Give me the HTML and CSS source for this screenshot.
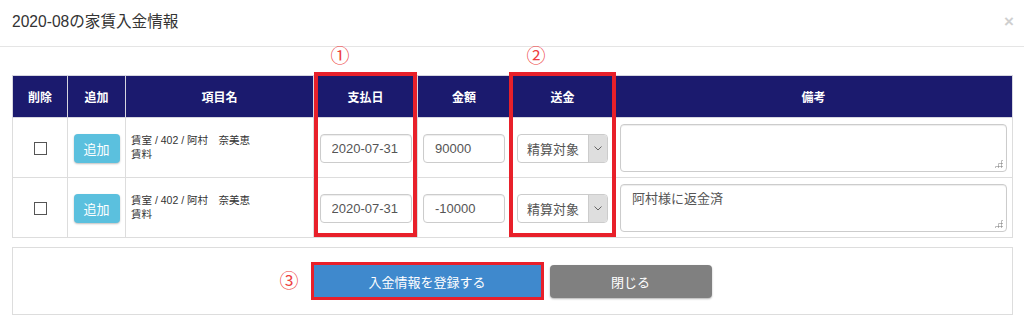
FILE: index.html
```html
<!DOCTYPE html>
<html lang="ja">
  <head>
    <meta charset="UTF-8" />
    <meta name="viewport" content="width=device-width, initial-scale=1.0" />
    <title>家賃入金情報</title>
    <link rel="stylesheet" href="styles.css">
  </head>
  <body>
    <div class="modal">
      <div class="modal-header">
        <h4 class="modal-title">2020-08の家賃入金情報</h4>
        <span class="close">&times;</span>
      </div>
      <div class="modal-body">
        <div class="table-wrap">
          <table class="payments">
            <colgroup>
              <col style="width: 55px" />
              <col style="width: 58px" />
              <col style="width: 188px" />
              <col style="width: 104px" />
              <col style="width: 93px" />
              <col style="width: 104px" />
              <col />
            </colgroup>
            <thead>
              <tr>
                <th>削除</th>
                <th>追加</th>
                <th>項目名</th>
                <th>支払日</th>
                <th>金額</th>
                <th>送金</th>
                <th>備考</th>
              </tr>
            </thead>
            <tbody>
              <tr>
                <td><input type="checkbox" class="check" /></td>
                <td><button class="btn-add">追加</button></td>
                <td class="item-name">賃室 / 402 / 阿村　奈美恵<br />賃料</td>
                <td><input class="input input-date" value="2020-07-31" /></td>
                <td><input class="input input-amount" value="90000" /></td>
                <td>
                  <div class="select">
                    <span class="select-value">精算対象</span>
                    <span class="select-arrow">
                      <svg width="8" height="5" viewBox="0 0 8 5"><path d="M0.5 0.5 L4 4 L7.5 0.5" fill="none" stroke="#666" stroke-width="1" /></svg>
                    </span>
                  </div>
                </td>
                <td><div class="note-wrap"><textarea class="note"></textarea></div></td>
              </tr>
              <tr>
                <td><input type="checkbox" class="check" /></td>
                <td><button class="btn-add">追加</button></td>
                <td class="item-name">賃室 / 402 / 阿村　奈美恵<br />賃料</td>
                <td><input class="input input-date" value="2020-07-31" /></td>
                <td><input class="input input-amount" value="-10000" /></td>
                <td>
                  <div class="select">
                    <span class="select-value">精算対象</span>
                    <span class="select-arrow">
                      <svg width="8" height="5" viewBox="0 0 8 5"><path d="M0.5 0.5 L4 4 L7.5 0.5" fill="none" stroke="#666" stroke-width="1" /></svg>
                    </span>
                  </div>
                </td>
                <td><div class="note-wrap"><textarea class="note">阿村様に返金済</textarea></div></td>
              </tr>
            </tbody>
          </table>
          <span class="mark mark-1">①</span>
          <span class="mark mark-2">②</span>
          <div class="highlight hl-date"></div>
          <div class="highlight hl-send"></div>
        </div>
        <div class="panel">
          <span class="mark mark-3">③</span>
          <button class="btn btn-primary">入金情報を登録する</button>
          <button class="btn btn-close">閉じる</button>
        </div>
      </div>
    </div>
  </body>
</html>
```

FILE: styles.css
```css
body {
  margin: 0;
  font-family: "Liberation Sans", "Noto Sans CJK JP", sans-serif;
  background-color: #fff;
  color: #333;
}
.modal-header {
  height: 47px;
  box-sizing: border-box;
  border-bottom: 1px solid #e5e5e5;
  display: flex;
  align-items: center;
  justify-content: space-between;
  padding: 0 10px 2px 12px;
}
.modal-title {
  margin: 0;
  font-size: 15.6px;
  font-weight: normal;
  line-height: 20px;
  color: #333;
}
.close {
  color: #cfcfcf;
  font-size: 17px;
  font-weight: bold;
  line-height: 18px;
}
.modal-body {
  padding: 28px 11px 20px 12px;
}
.table-wrap {
  position: relative;
}
.payments {
  width: 1001px;
  border-collapse: collapse;
  table-layout: fixed;
}
.payments th {
  background: #1b1a6e;
  color: #fff;
  font-size: 12px;
  font-weight: bold;
  height: 41px;
  padding: 0;
  border: 1px solid #d6d6e0;
}
.payments td {
  border: 1px solid #ddd;
  padding: 6px 5px 5px;
  vertical-align: middle;
  text-align: center;
}
.check {
  appearance: none;
  -webkit-appearance: none;
  display: block;
  width: 13px;
  height: 13px;
  margin: 0 auto;
  border: 1px solid #555;
  background: #fff;
}
.btn-add {
  background: #5bc0de;
  color: #fff;
  border: none;
  border-radius: 4px;
  width: 46px;
  height: 29px;
  font-size: 13px;
  font-family: inherit;
  padding: 0;
  box-shadow: 0 1px 2px rgba(0, 0, 0, 0.25);
}
.payments td.item-name {
  text-align: left;
  font-size: 10.5px;
  line-height: 14px;
  color: #333;
  padding-top: 0;
  padding-bottom: 2px;
}
.input {
  display: block;
  margin: 0 auto;
  height: 29px;
  box-sizing: border-box;
  border: 1px solid #ccc;
  border-radius: 4px;
  padding: 0 11px;
  font-size: 13px;
  font-family: inherit;
  color: #555;
  box-shadow: inset 0 1px 1px rgba(0, 0, 0, 0.075);
}
.input-date {
  width: 92px;
}
.input-amount {
  width: 82px;
}
.select {
  display: flex;
  width: 91px;
  height: 29px;
  box-sizing: border-box;
  margin: 0 auto;
  border: 1px solid #ccc;
  border-radius: 4px;
  overflow: hidden;
  background: #fff;
}
.select-value {
  flex: 1;
  display: flex;
  align-items: center;
  justify-content: center;
  font-size: 13px;
  color: #555;
}
.select-arrow {
  width: 18px;
  display: flex;
  align-items: center;
  justify-content: center;
  background: #dedede;
  border-left: 1px solid #ccc;
}
.note-wrap {
  position: relative;
}
.note-wrap::after {
  content: "";
  position: absolute;
  right: 4px;
  bottom: 4px;
  width: 9px;
  height: 9px;
  background-image: radial-gradient(circle, #999 0.9px, transparent 1.2px);
  background-size: 3px 3px;
  clip-path: polygon(100% 0, 100% 100%, 0 100%);
}
.note {
  display: block;
  width: 100%;
  height: 48px;
  box-sizing: border-box;
  border: 1px solid #ccc;
  border-radius: 4px;
  padding: 6px 11px;
  font-size: 13px;
  line-height: 16px;
  font-family: inherit;
  color: #555;
  resize: none;
  box-shadow: inset 0 1px 1px rgba(0, 0, 0, 0.075);
}
.mark {
  position: absolute;
  width: 20px;
  text-align: center;
  font-size: 19px;
  line-height: 20px;
  color: #ee4040;
}
.mark-1 {
  left: 318px;
  top: -28px;
}
.mark-2 {
  left: 514px;
  top: -28px;
}
.mark-3 {
  left: 266px;
  top: 24px;
}
.highlight {
  position: absolute;
  top: -3px;
  height: 165px;
  box-sizing: border-box;
  border: 4px solid #e8202a;
}
.hl-date {
  left: 302px;
  width: 103px;
}
.hl-send {
  left: 497px;
  width: 107px;
}
.panel {
  position: relative;
  margin-top: 9px;
  width: 1001px;
  height: 68px;
  box-sizing: border-box;
  border: 1px solid #ddd;
  display: flex;
  align-items: center;
  justify-content: center;
  gap: 9px;
}
.btn {
  border: none;
  color: #fff;
  font-size: 13px;
  font-family: inherit;
  padding: 0;
}
.btn-primary {
  width: 227px;
  height: 32px;
  background: #3f89cd;
  outline: 3px solid #e8202a;
}
.btn-close {
  width: 162px;
  height: 33px;
  background: #808080;
  border-radius: 4px;
  box-shadow: 0 1px 2px rgba(0, 0, 0, 0.3);
}
```
